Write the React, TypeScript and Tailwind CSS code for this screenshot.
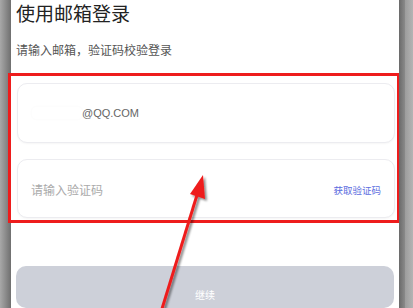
export default function App() {
  return (
    <div
      className="relative flex h-[308px] w-[413px] overflow-hidden bg-white"
      style={{ fontFamily: '"Noto Sans CJK SC", "Noto Sans", sans-serif' }}
    >
      {/* left frame */}
      <div className="w-[11px] shrink-0 bg-gradient-to-r from-[#a8a8a8] via-[#8c8c8c] to-[#6f6f6f]" />

      {/* main panel */}
      <div className="flex w-[388px] shrink-0 flex-col bg-white">
        <h1 className="ml-[5px] mt-[2px] text-[19px] leading-[22px] text-[#222]">使用邮箱登录</h1>
        <p className="ml-[5px] mt-[19px] text-[12px] leading-[14px] text-[#555]">请输入邮箱，验证码校验登录</p>

        {/* highlighted inputs */}
        <div className="-ml-[3px] mt-[16px] flex h-[150px] w-[392px] flex-col gap-[16px] border-[3px] border-[#ee1c1c] pb-[2px] pl-[6px] pr-[2px] pt-[7px]">
          <div className="flex h-[60px] items-center rounded-[10px] border border-[#ececf0] bg-white pl-[14px] shadow-[0_1px_2px_rgba(0,0,0,0.04)]">
            <div className="h-[12px] w-[50px] rounded bg-white shadow-[0_0_3px_rgba(0,0,0,0.03)]" />
            <span className="text-[11px] text-[#666]" style={{ fontFamily: '"Liberation Sans", sans-serif' }}>
              @QQ.COM
            </span>
          </div>
          <div className="flex h-[59px] items-center justify-between rounded-[10px] border border-[#ececf0] bg-white pl-[13px] pr-[13px] pt-[3px] shadow-[0_1px_2px_rgba(0,0,0,0.04)]">
            <span className="text-[12px] text-[#aaa]">请输入验证码</span>
            <span className="text-[9.5px] text-[#5b6de0]">获取验证码</span>
          </div>
        </div>

        {/* continue button */}
        <div className="ml-[5px] mt-[43px] flex h-[60px] w-[378px] items-start justify-center rounded-[10px] bg-[#cdd0d9] pt-[21px]">
          <span className="text-[10px] text-white">继续</span>
        </div>
      </div>

      {/* right frame */}
      <div className="flex flex-1">
        <div className="w-[6px] bg-gradient-to-r from-[#6a6a6a] to-[#8a8a8a]" />
        <div className="flex-1 bg-gradient-to-r from-[#9c9c9c] to-[#b4b4b4]" />
      </div>

      {/* annotation arrow */}
      <svg className="pointer-events-none absolute left-0 top-0" width="413" height="308" viewBox="0 0 413 308">
        <defs>
          <filter id="sh" x="-20%" y="-20%" width="140%" height="140%">
            <feDropShadow dx="2" dy="2" stdDeviation="1.2" floodColor="#000" floodOpacity="0.45" />
          </filter>
        </defs>
        <g filter="url(#sh)">
          <line x1="161" y1="312" x2="197" y2="195" stroke="#ee1c1c" strokeWidth="3" />
          <polygon points="203,175 190,194 205,199" fill="#ee1c1c" />
        </g>
      </svg>
    </div>
  )
}
